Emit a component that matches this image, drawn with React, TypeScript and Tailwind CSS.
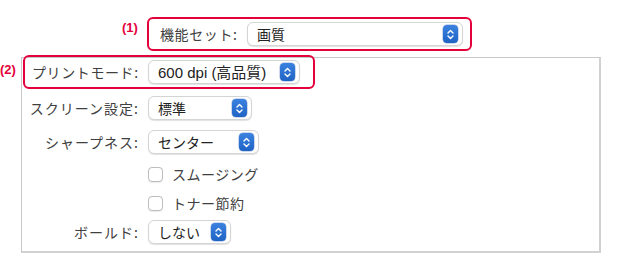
import React from "react";

const font = { fontFamily: '"Noto Sans CJK JP", "Noto Sans", sans-serif' };

function Stepper() {
  return (
    <div className="flex h-[18px] w-[15px] items-center justify-center rounded-[4px] bg-gradient-to-b from-[#3b82e0] to-[#1f63c4] shadow-[0_0_0_0.5px_rgba(0,60,160,0.4)]">
      <svg width="9" height="13" viewBox="0 0 9 13">
        <path
          d="M2 5 L4.5 2.5 L7 5 M2 8 L4.5 10.5 L7 8"
          stroke="white"
          strokeWidth="1.4"
          fill="none"
          strokeLinecap="round"
          strokeLinejoin="round"
        />
      </svg>
    </div>
  );
}

function Popup({ value, width, latin }: { value: string; width: string; latin?: boolean }) {
  return (
    <div
      className={`flex h-[24px] ${width} items-center justify-between rounded-[6px] border border-[#d4d4d4] bg-white pl-[9px] pr-[4px] text-[14px] text-[#222] shadow-[0_1px_1px_rgba(0,0,0,0.12)]`}
    >
      <span
        className="leading-none"
        style={latin ? { fontFamily: '"Liberation Sans", "Noto Sans CJK JP", sans-serif', fontSize: "15px" } : undefined}
      >
        {value}
      </span>
      <Stepper />
    </div>
  );
}

function Checkbox({ label }: { label: string }) {
  return (
    <div className="flex items-center">
      <div className="h-[15px] w-[15px] rounded-[4px] border border-[#bdbdbd] bg-white shadow-[0_0.5px_1px_rgba(0,0,0,0.08)]" />
      <span className="ml-[9px] text-[14px] tracking-[0.5px] text-[#404040]">{label}</span>
    </div>
  );
}

export default function App() {
  return (
    <div className="h-[262px] w-[642px] bg-white" style={font}>
      {/* top row */}
      <div className="flex pt-[17px]">
        <div className="w-[122px]" />
        <div
          className="w-[25px] pt-[4px] text-[13px] font-bold leading-none text-[#e4003b]"
          style={{ fontFamily: '"Liberation Sans", Arial, sans-serif' }}
        >
          (1)
        </div>
        <div className="flex h-[34px] w-[325px] items-center rounded-[6px] border-2 border-[#e4003b] pl-[11px]">
          <span className="w-[87px] text-[14px] tracking-[0.6px] text-[#404040]">機能セット:</span>
          <Popup value="画質" width="w-[216px]" />
        </div>
      </div>

      {/* panel row */}
      <div className="mt-[6px] flex">
        <div
          className="w-[21px] pt-[6px] text-[13px] font-bold leading-none text-[#e4003b]"
          style={{ fontFamily: '"Liberation Sans", Arial, sans-serif' }}
        >
          (2)
        </div>
        <div className="flex h-[196px] w-[580px] flex-col border border-[#c8c8c8] border-r-2 border-b-2 border-r-[#d2d2d2] border-b-[#d2d2d2] pl-[1px]">
          {/* box 2 */}
          <div className="-mt-[3px] flex h-[34px] w-[292px] items-center rounded-[6px] border-2 border-[#e4003b] pl-[7px]">
            <span className="w-[116px] whitespace-nowrap text-[14px] tracking-[0.6px] text-[#404040]">プリントモード:</span>
            <Popup value="600 dpi (高品質)" width="w-[152px]" latin />
          </div>
          <div className="flex h-[38px] items-center">
            <span className="w-[125px] whitespace-nowrap pr-[9px] text-right text-[14px] tracking-[1px] text-[#404040]">スクリーン設定:</span>
            <Popup value="標準" width="w-[104px]" />
          </div>
          <div className="flex h-[30px] items-center">
            <span className="w-[125px] whitespace-nowrap pr-[9px] text-right text-[14px] tracking-[1px] text-[#404040]">シャープネス:</span>
            <Popup value="センター" width="w-[111px]" />
          </div>
          <div className="flex h-[34px] items-center pl-[125px]">
            <Checkbox label="スムージング" />
          </div>
          <div className="flex h-[24px] items-center pl-[125px]">
            <Checkbox label="トナー節約" />
          </div>
          <div className="flex h-[34px] items-center">
            <span className="w-[125px] whitespace-nowrap pr-[9px] text-right text-[14px] tracking-[1px] text-[#404040]">ボールド:</span>
            <Popup value="しない" width="w-[83px]" />
          </div>
        </div>
      </div>
    </div>
  );
}
